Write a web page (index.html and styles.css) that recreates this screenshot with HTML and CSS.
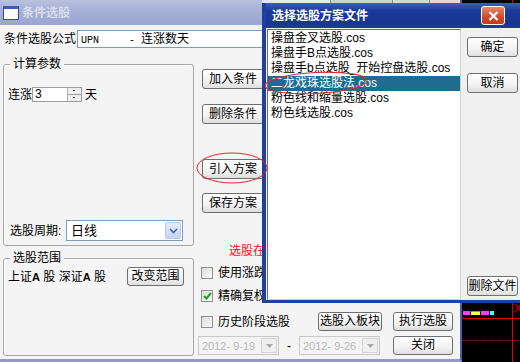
FILE: index.html
```html
<!DOCTYPE html>
<html lang="zh-CN">
<head>
<meta charset="utf-8">
<title>条件选股</title>
<link rel="stylesheet" href="styles.css">
</head>
<body>
<div class="chart">
  <div class="chart-body">
    <div class="bars"><i class="b1"></i><i class="b2"></i><i class="b3"></i><i class="b4"></i></div>
    <div class="hline"></div>
    <div class="dline"></div>
    <div class="vline"></div>
    <span class="cx">X</span>
  </div>
</div>

<div class="win main">
  <div class="titlebar">
    <span class="appicon"></span>
    <span class="title">条件选股</span>
  </div>
  <div class="client">
    <div class="formula-row">
      <span class="flabel">条件选股公式</span>
      <div class="textbox formula"><span class="code">UPN     - </span><span>连涨数天</span></div>
    </div>
    <div class="cols">
      <div class="leftcol">
        <div class="group g1">
          <div class="gtitle">计算参数</div>
          <div class="param-row">
            <span>连涨</span>
            <div class="spin"><span class="spinval">3</span><span class="spinbtns"><i class="up"></i><i class="dn"></i></span></div>
            <span class="unit">天</span>
          </div>
          <div class="period-row">
            <span class="plabel">选股周期:</span>
            <div class="combo"><span class="ctext">日线</span><span class="dropbtn"><svg width="9" height="6" viewBox="0 0 9 6"><path d="M1 1 L4.5 4.5 L8 1" fill="none" stroke="#4d6185" stroke-width="1.6"/></svg></span></div>
          </div>
        </div>
        <div class="group g2">
          <div class="gtitle">选股范围</div>
          <div class="range-row">
            <span>上证<b>A</b> 股 深证<b>A</b> 股</span>
            <button class="btn wrange">改变范围</button>
          </div>
        </div>
      </div>
      <div class="rightcol">
        <button class="btn side b-add">加入条件</button>
        <button class="btn side b-del">删除条件</button>
        <button class="btn side b-imp">引入方案</button>
        <button class="btn side b-save">保存方案</button>
        <div class="redtext">选股在以下条件中执行</div>
        <div class="chk-row r1"><span class="chk"></span><span class="clabel">使用涨跌不设限制</span></div>
        <div class="chk-row r2"><span class="chk on"><svg width="9" height="8" viewBox="0 0 9 8"><path d="M1 4 L3.5 6.5 L8 1" fill="none" stroke="#21a121" stroke-width="2"/></svg></span><span class="clabel">精确复权</span></div>
        <div class="chk-row r3"><span class="chk"></span><span class="clabel">历史阶段选股</span>
          <button class="btn w64 push">选股入板块</button>
          <button class="btn w59 gap11">执行选股</button>
        </div>
        <div class="date-row">
          <div class="date"><span class="dtext">2012- 9-19</span><span class="ddrop"><svg width="7" height="4" viewBox="0 0 7 4"><path d="M0 0 H7 L3.5 4 Z" fill="#a9a9a9"/></svg></span></div>
          <span class="dash">-</span>
          <div class="date"><span class="dtext">2012- 9-26</span><span class="ddrop"><svg width="7" height="4" viewBox="0 0 7 4"><path d="M0 0 H7 L3.5 4 Z" fill="#a9a9a9"/></svg></span></div>
          <button class="btn w59 push">关闭</button>
        </div>
      </div>
    </div>
  </div>
</div>

<div class="peek"><i class="p1"></i><i class="p2"></i><i class="p3"></i><i class="p4"></i></div>

<div class="win dialog">
  <div class="dtitlebar">
    <span class="dtitle">选择选股方案文件</span>
    <span class="closebtn"><svg width="11" height="10" viewBox="0 0 11 10"><path d="M1.5 1 L9.5 9 M9.5 1 L1.5 9" stroke="#fff" stroke-width="2.2"/></svg></span>
  </div>
  <div class="dclient">
    <div class="filelist">
      <div class="item">操盘金叉选股.cos</div>
      <div class="item">操盘手B点选股.cos</div>
      <div class="item">操盘手b点选股_开始控盘选股.cos</div>
      <div class="item sel">二龙戏珠选股法.cos</div>
      <div class="item">粉色线和缩量选股.cos</div>
      <div class="item">粉色线选股.cos</div>
    </div>
    <div class="dside">
      <button class="btn dbtn">确定</button>
      <button class="btn dbtn cancel">取消</button>
      <button class="btn dbtn delfile">删除文件</button>
    </div>
  </div>
</div>

<svg class="marks" width="520" height="362" viewBox="0 0 520 362">
  <ellipse cx="232" cy="168" rx="35" ry="15" fill="none" stroke="#e3262a" stroke-width="1"/>
  <ellipse cx="316" cy="83" rx="51" ry="10.5" fill="none" stroke="#e3262a" stroke-width="1" transform="rotate(-3 316 83)"/>
</svg>
</body>
</html>
```

FILE: styles.css
```css
* { box-sizing: border-box; }
html, body { margin: 0; padding: 0; }
body {
  width: 520px;
  height: 362px;
  overflow: hidden;
  position: relative;
  background: #f4f4f4;
  font-family: "Liberation Sans", "Noto Sans CJK SC", sans-serif;
  font-size: 12px;
  line-height: 14px;
  color: #000;
}
button { font: inherit; color: #000; padding: 0; margin: 0; }

/* generic XP-ish button */
.btn {
  height: 20px;
  border: 1px solid #6f6f6f;
  border-radius: 3px;
  background: linear-gradient(#ffffff, #f2f2f2 60%, #dedede);
  line-height: 18px;
  text-align: center;
  white-space: nowrap;
}

/* ---------- chart window (behind, at right) ---------- */
.chart {
  position: absolute;
  left: 460px;
  top: 0;
  width: 60px;
  height: 362px;
  background: #000;
  border-left: 2px solid #2a46a8;
}
.chart-body { position: relative; height: 100%; }
.bars { position: absolute; left: 1px; top: 311px; display: flex; gap: 1px; }
.bars i { display: block; height: 4px; }
.bars .b1 { width: 7px; background: #ff3cff; }
.bars .b2 { width: 9px; background: #ffff50; border-top: 1px solid #ff3cff; }
.bars .b3 { width: 8px; background: #ff3cff; }
.bars .b4 { width: 4px; background: #50ffff; }
.hline { position: absolute; left: 0; right: 0; top: 318px; height: 1px; background: #e00000; }
.dline { position: absolute; left: 0; right: 0; top: 340px; height: 0; border-top: 1px dotted #c00000; }
.vline { position: absolute; left: 50px; top: 0; bottom: 0; width: 1px; background: #e00000; }
.cx { position: absolute; left: 52px; top: 303px; color: #e00000; font-size: 11px; line-height: 12px; font-family: "DejaVu Sans", sans-serif; }

/* strip of another window peeking above the dialog */
.peek {
  position: absolute;
  left: 262px;
  top: 0;
  width: 198px;
  height: 4px;
  display: flex;
  z-index: 1;
  background: #e6e8f0;
}
.peek i { display: block; height: 4px; }
.peek .p1 { width: 68px; }
.peek .p2 { width: 63px; background: #cfd0d4; border-left: 1px solid #8c8c8c; border-right: 1px solid #8c8c8c; }
.peek .p3 { width: 37px; background: #d6d6da; border-right: 1px solid #8c8c8c; }
.peek .p4 { width: 30px; background: #ecd0dc; }

/* ---------- main window ---------- */
.main {
  position: absolute;
  left: 0;
  top: 0;
  width: 462px;
  height: 362px;
  background: #f4f4f4;
  border-right: 2px solid #4c5cae;
  border-bottom: 3px solid #9098cc;
  display: flex;
  flex-direction: column;
}
.titlebar {
  height: 25px;
  flex: none;
  background: linear-gradient(#b9c1df, #a7b1d6 40%, #9ba5d0);
  display: flex;
  align-items: center;
  padding-left: 3px;
}
.appicon {
  width: 16px;
  height: 14px;
  border: 1px solid #3b4c8c;
  border-top: 3px solid #3b5cb8;
  background: #fff;
}
.title {
  margin-left: 3px;
  font-weight: bold;
  color: #d9ddec;
  font-size: 12px;
}
.client { flex: 1; display: flex; flex-direction: column; }
.formula-row {
  margin-top: 5px;
  height: 18px;
  display: flex;
  align-items: center;
}
.flabel { padding-left: 4px; width: 77px; flex: none; white-space: nowrap; }
.textbox {
  flex: 1;
  height: 18px;
  background: #fff;
  border: 1px solid #7f9db9;
}
.formula {
  padding-left: 3px;
  white-space: pre;
  line-height: 16px;
}
.formula .code { font-family: "Liberation Mono", monospace; font-size: 10px; }
.cols { display: flex; flex: 1; }
.leftcol { width: 191px; margin-left: 3px; flex: none; }
.group {
  border: 1px solid #a6a6a6;
  border-radius: 3px;
  box-shadow: 1px 1px 0 #fff inset;
}
.gtitle {
  align-self: flex-start;
  width: max-content;
  margin: -8px 0 0 6px;
  padding: 0 3px;
  background: #f4f4f4;
  line-height: 14px;
}
.g1 {
  height: 182px;
  margin-top: 16px;
  display: flex;
  flex-direction: column;
}
.param-row {
  margin-top: 16px;
  height: 15px;
  display: flex;
  align-items: center;
  padding-left: 4px;
}
.spin {
  display: flex;
  width: 50px;
  height: 15px;
  border: 1px solid #9c9c9c;
  background: #fff;
}
.spinval { flex: 1; padding-left: 2px; line-height: 13px; }
.spinbtns {
  width: 14px;
  display: flex;
  flex-direction: column;
  border-left: 1px solid #b4b4b4;
  background: #eeeeee;
}
.spinbtns i { flex: 1; display: block; position: relative; }
.spinbtns .up { border-bottom: 1px solid #9c9c9c; }
.spinbtns i::after {
  content: "";
  position: absolute;
  left: 5px;
  top: 2px;
  width: 2px;
  height: 1px;
  background: #444;
}
.unit { margin-left: 3px; }
.period-row {
  margin-top: auto;
  margin-bottom: 4px;
  height: 21px;
  display: flex;
  align-items: center;
  padding-left: 6px;
}
.plabel { width: 56px; flex: none; white-space: nowrap; }
.combo {
  width: 117px;
  height: 21px;
  background: #fff;
  border: 1px solid #7f9db9;
  display: flex;
  align-items: center;
  padding: 1px;
}
.ctext { flex: 1; padding-left: 3px; font-size: 13px; }
.dropbtn {
  width: 16px;
  height: 17px;
  border: 1px solid #b6c8ee;
  border-radius: 2px;
  background: linear-gradient(#e4ecfd, #c4d4f8);
  display: flex;
  align-items: center;
  justify-content: center;
}
.g2 {
  height: 98px;
  margin-top: 12px;
  display: flex;
  flex-direction: column;
}
.range-row {
  margin-top: 2px;
  height: 19px;
  display: flex;
  align-items: center;
  padding: 0 9px 0 4px;
  white-space: nowrap;
}
.range-row b { font-weight: bold; font-size: 11px; }
.wrange { width: 57px; height: 19px; margin-left: auto; line-height: 17px; }

.rightcol { flex: 1; display: flex; flex-direction: column; min-width: 0; padding-right: 7px; }
.side { width: 62px; margin-left: 8px; }
.b-add { margin-top: 21px; }
.b-del { margin-top: 15px; }
.b-imp { margin-top: 35px; }
.b-save { margin-top: 14px; }
.redtext {
  margin-top: 31px;
  margin-left: 35px;
  color: #ff1010;
  white-space: nowrap;
  line-height: 14px;
}
.chk-row {
  display: flex;
  align-items: center;
  padding-left: 7px;
  white-space: nowrap;
  height: 15px;
}
.chk-row.r1 { margin-top: 7px; }
.chk-row.r2 { margin-top: 8px; }
.chk-row.r3 { margin-top: 9px; height: 19px; }
.chk {
  width: 12px;
  height: 12px;
  flex: none;
  border: 1px solid #8e9194;
  background: linear-gradient(135deg, #dcdcd7, #fbfbfa);
  display: flex;
  align-items: center;
  justify-content: center;
}
.clabel { margin-left: 5px; }
.btn.w64 { width: 64px; height: 19px; line-height: 17px; }
.btn.w59 { width: 60px; height: 19px; line-height: 17px; }
.push { margin-left: auto; }
.gap11 { margin-left: 11px; }
.date-row {
  margin-top: 5px;
  height: 19px;
  display: flex;
  align-items: center;
  padding-left: 4px;
}
.date {
  width: 81px;
  height: 19px;
  border: 1px solid #c9c9c9;
  background: #f4f4f4;
  display: flex;
  align-items: center;
  padding: 1px;
}
.dtext {
  flex: 1;
  padding-left: 2px;
  color: #b8b8b8;
  font-size: 11px;
  white-space: pre;
}
.ddrop {
  width: 16px;
  height: 15px;
  border: 1px solid #d3d3d3;
  background: #efefef;
  display: flex;
  align-items: center;
  justify-content: center;
}
.dash { width: 20px; text-align: center; }

/* ---------- dialog ---------- */
.dialog {
  position: absolute;
  left: 262px;
  top: 3px;
  width: 262px;
  height: 300px;
  background: #f0f0f0;
  border-left: 4px solid #213f9c;
  border-bottom: 3px solid #213f9c;
  display: flex;
  flex-direction: column;
  z-index: 2;
}
.dtitlebar {
  height: 25px;
  flex: none;
  background: linear-gradient(#3a5fc0, #1c3c9a 30%, #183590 80%, #1e3d98);
  display: flex;
  align-items: center;
  padding-left: 6px;
  padding-right: 19px;
}
.dtitle { color: #fff; font-weight: bold; white-space: nowrap; }
.closebtn {
  margin-left: auto;
  width: 24px;
  height: 19px;
  flex: none;
  border: 1px solid #fff;
  border-radius: 3px;
  background: linear-gradient(#e88a6c, #d2482a 60%, #c53b1f);
  display: flex;
  align-items: center;
  justify-content: center;
}
.dclient { flex: 1; display: flex; }
.filelist {
  width: 194px;
  margin: 1px 0 0 1px;
  background: #fff;
  border: 1px solid #6f6f6f;
  border-right-color: #cfcfcf;
  border-bottom-color: #cfcfcf;
  padding-top: 1px;
}
.item {
  height: 15px;
  line-height: 15px;
  padding-left: 3px;
  white-space: nowrap;
}
.item.sel { background: #1f6c92; color: #fff; }
.dside {
  flex: 1;
  display: flex;
  flex-direction: column;
  padding: 9px 0 4px 6px;
}
.dbtn { width: 51px; height: 20px; }
.cancel { margin-top: 16px; }
.delfile { margin-top: auto; height: 20px; }

.marks { position: absolute; left: 0; top: 0; z-index: 3; pointer-events: none; }
```
